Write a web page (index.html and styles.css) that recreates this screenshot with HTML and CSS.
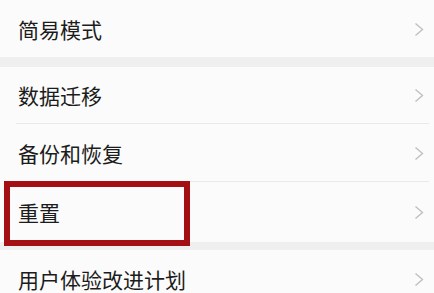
FILE: index.html
```html
<!DOCTYPE html>
<html lang="zh-CN">
<head>
<meta charset="utf-8">
<link rel="stylesheet" href="styles.css">
</head>
<body>
<div class="page">
  <div class="group">
    <div class="row first"><span class="label">简易模式</span><svg class="chev" viewBox="0 0 10 15"><path d="M1.5 1.5 L8.5 7.5 L1.5 13.5"/></svg></div>
  </div>
  <div class="band"></div>
  <div class="group">
    <div class="row r57 divided"><span class="label">数据迁移</span><svg class="chev" viewBox="0 0 10 15"><path d="M1.5 1.5 L8.5 7.5 L1.5 13.5"/></svg></div>
    <div class="row r58 divided"><span class="label">备份和恢复</span><svg class="chev" viewBox="0 0 10 15"><path d="M1.5 1.5 L8.5 7.5 L1.5 13.5"/></svg></div>
    <div class="row r60"><span class="label">重置</span><svg class="chev" viewBox="0 0 10 15"><path d="M1.5 1.5 L8.5 7.5 L1.5 13.5"/></svg></div>
  </div>
  <div class="band short"></div>
  <div class="group">
    <div class="row r58"><span class="label">用户体验改进计划</span><svg class="chev" viewBox="0 0 10 15"><path d="M1.5 1.5 L8.5 7.5 L1.5 13.5"/></svg></div>
  </div>
  <div class="highlight"></div>
</div>
</body>
</html>
```
FILE: styles.css
```css
html, body {
  margin: 0;
  padding: 0;
  background: #fbfbfb;
}
.page {
  position: relative;
  width: 434px;
  height: 293px;
  overflow: hidden;
  font-family: "Noto Sans CJK SC", "Noto Sans", sans-serif;
}
.group {
  background: #fbfbfb;
}
.band {
  height: 10px;
  background: #efefef;
}
.band.short {
  height: 8px;
}
.row {
  position: relative;
  display: flex;
  align-items: center;
  justify-content: space-between;
  padding: 0 10px 0 18px;
  box-sizing: border-box;
}
.first { height: 57px; padding-top: 2px; }
.r57 { height: 57px; }
.r58 { height: 58px; }
.r60 { height: 60px; }
.row.divided::after {
  content: "";
  position: absolute;
  left: 16px;
  right: 5px;
  bottom: 0;
  height: 1px;
  background: #e9e9e9;
}
.label {
  font-size: 21px;
  color: #1c1c1c;
  line-height: 1;
}
.chev {
  width: 10px;
  height: 15px;
  fill: none;
  stroke: #c0c0c0;
  stroke-width: 1.4;
}
.highlight {
  position: absolute;
  left: 4px;
  top: 181px;
  width: 186px;
  height: 65px;
  box-sizing: border-box;
  border: 6px solid #a30f13;
}
```
